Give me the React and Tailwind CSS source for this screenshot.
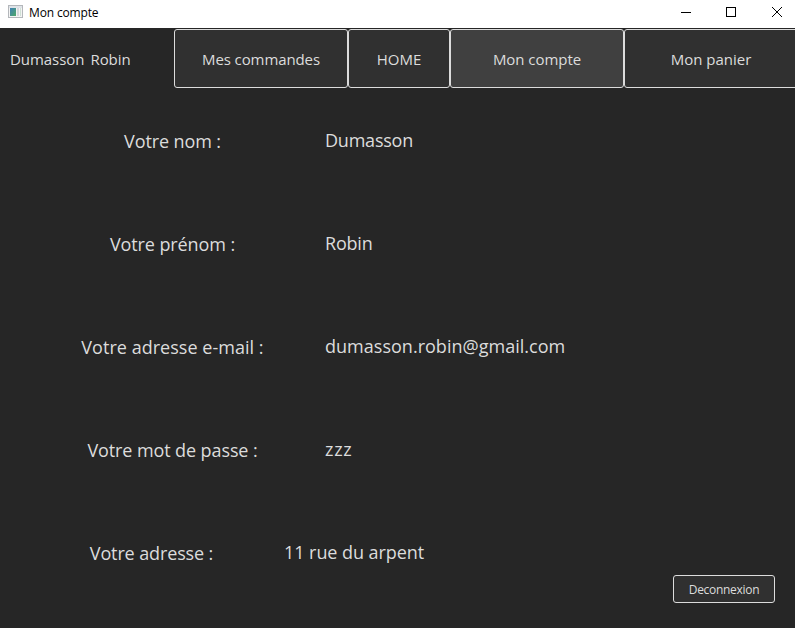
const navItems = [
  { label: "Mes commandes", box: "w-[174px]", track: "tracking-[-0.1px]" },
  { label: "HOME", box: "w-[102px]", track: "" },
  { label: "Mon compte", box: "w-[174px]", track: "tracking-[-0.05px]", active: true },
  { label: "Mon panier", box: "w-[174px]", track: "" },
];

const fields = [
  { label: "Votre nom :", value: "Dumasson", cell: "w-[345px]", gap: "w-[325px]", labelTrack: "tracking-[-0.1px]", track: "tracking-[-0.22px]" },
  { label: "Votre prénom :", value: "Robin", cell: "w-[345px]", gap: "w-[325px]", labelTrack: "tracking-[-0.1px]", track: "tracking-[-0.2px]" },
  { label: "Votre adresse e-mail :", value: "dumasson.robin@gmail.com", cell: "w-[345px]", gap: "w-[325px]", labelTrack: "tracking-[0.03px]", track: "tracking-[0.02px]" },
  { label: "Votre mot de passe :", value: "zzz", cell: "w-[345px]", gap: "w-[325px]", labelTrack: "tracking-[-0.1px]", track: "tracking-[0.7px]" },
  { label: "Votre adresse :", value: "11 rue du arpent", cell: "w-[303px]", gap: "w-[284px]", labelTrack: "tracking-[-0.12px]", track: "tracking-[-0.06px]" },
];

function AppIcon() {
  return (
    <svg width="16" height="14" viewBox="0 0 16 14" shapeRendering="crispEdges">
      <defs>
        <linearGradient id="pane" x1="0" y1="0" x2="1" y2="1">
          <stop offset="0" stopColor="#3f7fb5" />
          <stop offset="1" stopColor="#4ea968" />
        </linearGradient>
      </defs>
      <rect x="0.5" y="0.5" width="14" height="12" fill="#f4f4f4" stroke="#b4b7bb" />
      <rect x="1" y="1" width="13" height="2" fill="#dfe3e8" />
      <rect x="2" y="3" width="6" height="8" fill="url(#pane)" />
      <rect x="9" y="3" width="2" height="8" fill="#d6d8dc" />
      <rect x="12" y="3" width="1" height="8" fill="#cfe0d5" />
    </svg>
  );
}

function TitleBar() {
  return (
    <header className="flex h-7 items-center bg-white text-black">
      <div className="mb-[4px] ml-2">
        <AppIcon />
      </div>
      <span className="mb-[2px] ml-[5px] text-[12px] leading-4 tracking-[-0.15px]">Mon compte</span>
      <svg className="ml-auto" width="116" height="28" viewBox="679 0 116 28" fill="none" stroke="#000">
        <path d="M681 12.5h10" />
        <rect x="726.5" y="7.5" width="9" height="9" />
        <path d="M772 7l10 10M782 7l-10 10" />
      </svg>
    </header>
  );
}

export default function App() {
  return (
    <div className="flex h-[628px] w-[795px] flex-col overflow-hidden bg-[#262626] font-['Open_Sans',sans-serif] text-[#dcdcdc]">
      <TitleBar />
      <nav className="flex h-[60px] pt-px text-[15px]">
        <div className="flex w-[174px] shrink-0 items-center gap-[6px] pl-[10px] pt-px tracking-[-0.05px]">
          <span>Dumasson</span>
          <span>Robin</span>
        </div>
        {navItems.map((item) => (
          <button
            key={item.label}
            className={`flex h-[59px] shrink-0 items-center justify-center rounded-[3px] border border-[#dcdcdc] pt-px ${item.box} ${item.track} ${item.active ? "bg-[#404040]" : "bg-[#303030]"}`}
          >
            {item.label}
          </button>
        ))}
      </nav>
      <main className="flex flex-col gap-[75px] pt-[38px] text-[18px] leading-7">
        {fields.map((f) => (
          <div key={f.label} className="flex h-7">
            <div className={`${f.gap} shrink-0`}>
              <div className={`${f.cell} pt-px text-center ${f.labelTrack}`}>{f.label}</div>
            </div>
            <div className={`whitespace-nowrap ${f.track}`}>{f.value}</div>
          </div>
        ))}
      </main>
      <footer className="mt-[9px] flex justify-end pr-5">
        <button className="flex h-7 w-[102px] items-center justify-center rounded-[3px] border border-[#dcdcdc] bg-[#303030] pt-px text-[12px] tracking-[-0.3px]">
          Deconnexion
        </button>
      </footer>
    </div>
  );
}
